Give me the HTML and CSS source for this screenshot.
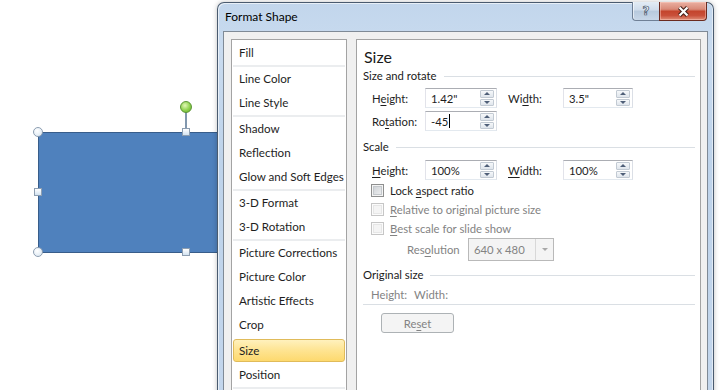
FILE: index.html
```html
<!DOCTYPE html>
<html>
<head>
<meta charset="utf-8">
<link rel="stylesheet" href="styles.css">
</head>
<body>
<div class="shape"></div>
<div class="rotline"></div>
<div class="hrot"></div>
<div class="hc h-tl"></div>
<div class="hc h-bl"></div>
<div class="hs h-ml"></div>
<div class="hs h-tm"></div>
<div class="hs h-bm"></div>

<div class="dialog">
  <div class="titlebar">
    <span class="title">Format Shape</span>
    <div class="caption">
      <div class="btn-help">?</div>
      <div class="btn-close">
        <svg width="13" height="11" viewBox="0 0 13 11"><path d="M2.5 1.5L10.5 9.5M10.5 1.5L2.5 9.5" stroke="#3d1c16" stroke-width="4.2"/><path d="M2.5 1.5L10.5 9.5M10.5 1.5L2.5 9.5" stroke="#ffffff" stroke-width="2.2"/></svg>
      </div>
    </div>
  </div>
  <div class="client">
    <ul class="nav">
      <li>Fill</li>
      <li class="sep"></li>
      <li>Line Color</li>
      <li>Line Style</li>
      <li class="sep"></li>
      <li>Shadow</li>
      <li>Reflection</li>
      <li>Glow and Soft Edges</li>
      <li class="sep"></li>
      <li>3-D Format</li>
      <li>3-D Rotation</li>
      <li class="sep"></li>
      <li>Picture Corrections</li>
      <li>Picture Color</li>
      <li>Artistic Effects</li>
      <li>Crop</li>
      <li class="sel">Size</li>
      <li>Position</li>
      <li class="sep"></li>
    </ul>
    <div class="panel">
      <h1 class="h1">Size</h1>
      <div class="group">Size and rotate</div>
      <div class="row r1">
        <span class="lbl">H<u>e</u>ight:</span>
        <div class="field"><span class="val">1.42"</span><div class="spin"><span class="up"></span><span class="dn"></span></div></div>
        <span class="lbl lbl2">Wi<u>d</u>th:</span>
        <div class="field fw"><span class="val">3.5"</span><div class="spin"><span class="up"></span><span class="dn"></span></div></div>
      </div>
      <div class="row r2">
        <span class="lbl">Ro<u>t</u>ation:</span>
        <div class="field"><span class="val">-45<i class="caret"></i></span><div class="spin"><span class="up"></span><span class="dn"></span></div></div>
      </div>
      <div class="group g2">Scale</div>
      <div class="row r3">
        <span class="lbl"><u>H</u>eight:</span>
        <div class="field"><span class="val">100%</span><div class="spin"><span class="up"></span><span class="dn"></span></div></div>
        <span class="lbl lbl2"><u>W</u>idth:</span>
        <div class="field fw"><span class="val">100%</span><div class="spin"><span class="up"></span><span class="dn"></span></div></div>
      </div>
      <div class="checks">
        <div class="chk"><span class="cb"></span><span>Lock <u>a</u>spect ratio</span></div>
        <div class="chk off"><span class="cb"></span><span><u>R</u>elative to original picture size</span></div>
        <div class="chk off"><span class="cb"></span><span><u>B</u>est scale for slide show</span></div>
      </div>
      <div class="res">
        <span class="reslbl">Res<u>o</u>lution</span>
        <div class="combo"><span class="cval">640 x 480</span><span class="drop"></span></div>
      </div>
      <div class="group g3">Original size</div>
      <div class="hw"><span>Height:</span><span>Width:</span></div>
      <div class="reset">Re<u>s</u>et</div>
    </div>
  </div>
</div>
</body>
</html>
```
FILE: styles.css
```css
* { box-sizing: border-box; }

body {
  margin: 0;
  width: 726px;
  height: 390px;
  overflow: hidden;
  position: relative;
  background: #ffffff;
  font-family: Lato, "Noto Sans", sans-serif;
  font-size: 11.3px;
  color: #1e1e1e;
}

u { text-decoration: underline; text-underline-offset: 2px; }

/* ---- slide canvas ---- */
.shape {
  position: absolute;
  left: 38px;
  top: 132px;
  width: 220px;
  height: 121px;
  background: #4f81bd;
  border: 1.5px solid #385d8a;
}
.rotline {
  position: absolute;
  left: 185px;
  top: 112px;
  width: 2px;
  height: 17px;
  background: #8197ae;
}
.hrot {
  position: absolute;
  left: 180px;
  top: 101px;
  width: 12px;
  height: 12px;
  border-radius: 50%;
  border: 1px solid #5a9434;
  background: radial-gradient(circle at 40% 35%, #e2f7b8, #8fd24e 55%, #62a82c);
}
.hc {
  position: absolute;
  width: 10px;
  height: 10px;
  border-radius: 50%;
  border: 1px solid #8d9eb1;
  background: radial-gradient(circle at 40% 35%, #ffffff, #d6e4f0);
}
.h-tl { left: 33px; top: 127px; }
.h-bl { left: 33px; top: 247px; }
.hs {
  position: absolute;
  width: 8px;
  height: 8px;
  border: 1px solid #8d9eb1;
  background: linear-gradient(#ffffff, #d3e3f1);
}
.h-ml { left: 34px; top: 188px; }
.h-tm { left: 182px; top: 128px; }
.h-bm { left: 182px; top: 248px; }

/* ---- dialog window ---- */
.dialog {
  position: absolute;
  left: 217px;
  top: 2px;
  width: 497px;
  height: 400px;
  border: 1px solid #4a5b6f;
  border-bottom: none;
  border-radius: 7px 7px 0 0;
  background: linear-gradient(to bottom, #c2d6ec, #c9dbef 12%, #bed3ea 40%, #c3d6ec);
  padding: 0 5px;
  display: flex;
  flex-direction: column;
  box-shadow: 0 0 5px rgba(0, 0, 0, 0.25), inset 1px 1px 0 rgba(255, 255, 255, 0.6), inset -1px 0 0 rgba(255, 255, 255, 0.5);
}

.titlebar {
  height: 28px;
  flex: none;
  display: flex;
  justify-content: space-between;
  align-items: flex-start;
}
.title {
  padding: 6px 0 0 2px;
  line-height: 16px;
  font-size: 12px;
  color: #000;
}
.caption {
  display: flex;
  margin-top: -1px;
  margin-right: 1px;
}
.btn-help {
  width: 27px;
  height: 19px;
  border: 1px solid #6f8096;
  border-top: none;
  border-right: none;
  border-radius: 0 0 0 4px;
  background: linear-gradient(#e3ecf5, #cfdceb 45%, #b7c9dd 50%, #c8d7e8);
  display: flex;
  align-items: center;
  justify-content: center;
  font-family: "DejaVu Sans", sans-serif;
  font-size: 12px;
  font-weight: bold;
  color: #eef3f8;
  -webkit-text-stroke: 0.7px #46556a;
  line-height: 19px;
  box-shadow: inset 1px 0 0 rgba(255, 255, 255, 0.6);
}
.btn-close {
  width: 48px;
  height: 19px;
  border: 1px solid #6a2a1f;
  border-top: none;
  border-radius: 0 0 4px 0;
  background: linear-gradient(#eab0a2, #d98a78 40%, #c4452d 52%, #c9503a 75%, #df8f78);
  display: flex;
  align-items: center;
  justify-content: center;
  box-shadow: inset 0 0 0 1px rgba(255, 210, 200, 0.45);
}

.client {
  flex: 1;
  background: #f0f0f0;
  border: 1px solid #7f8a96;
  border-bottom: none;
  display: flex;
  gap: 9px;
  padding: 7px 6px 0 7px;
}

/* ---- category list ---- */
.nav {
  width: 116px;
  flex: none;
  list-style: none;
  margin: 0;
  padding: 1px 0 0;
  background: #ffffff;
  border: 1px solid #a3a3a3;
  border-bottom: none;
}
.nav li {
  height: 24px;
  line-height: 24px;
  padding-left: 7px;
  white-space: nowrap;
  color: #1e1e1e;
  font-size: 11.6px;
}
.nav li.sep {
  height: 2px;
  margin: 0 1px;
  padding: 0;
  background: #ebedef;
}
.nav li.sel {
  height: 23px;
  line-height: 21px;
  margin: 2px 1px 1px;
  padding-left: 5px;
  border: 1px solid #e0bb5a;
  border-radius: 3px;
  background: linear-gradient(#fff1bd, #fee595 45%, #fdd96e);
}

/* ---- right panel ---- */
.panel {
  flex: 1;
  background: #ffffff;
  border: 1px solid #a3a3a3;
  border-bottom: none;
  padding: 6px 5px 0 6px;
}
.h1 {
  margin: 0;
  padding-left: 1px;
  font-size: 16px;
  line-height: 22px;
  font-weight: normal;
  color: #1a1a1a;
}
.group {
  display: flex;
  align-items: center;
  gap: 7px;
  height: 16px;
  line-height: 16px;
  color: #1a1a1a;
  white-space: nowrap;
}
.group::after {
  content: "";
  flex: 1;
  height: 1px;
  background: #dadfe4;
}
.g2 { margin-top: 8px; }
.g3 { margin-top: 6px; }

.row {
  display: flex;
  align-items: center;
  height: 20px;
  padding-left: 9px;
}
.r1 { margin-top: 4px; }
.r2 { margin-top: 3px; height: 20px; }
.r3 { margin-top: 5px; }
.lbl { width: 53px; flex: none; white-space: nowrap; }
.lbl2 { margin-left: 11px; width: 55px; }

.field {
  width: 72px;
  height: 20px;
  flex: none;
  display: flex;
  align-items: center;
  padding: 0 2px 0 5px;
  background: #ffffff;
  border: 1px solid;
  border-color: #abadb3 #dbdfe6 #e3e9ef #e2e3ea;
}
.fw { width: 70px; }
.val { flex: 1; white-space: nowrap; display: flex; align-items: center; }
.caret {
  display: inline-block;
  width: 1px;
  height: 14px;
  background: #000;
  margin-left: 1px;
}
.spin {
  width: 14px;
  height: 16px;
  display: flex;
  flex-direction: column;
  gap: 1px;
}
.spin span {
  flex: 1;
  border: 1px solid #c2cad3;
  border-radius: 1px;
  background: linear-gradient(#f6f8fa, #dfe5ec);
  display: flex;
  align-items: center;
  justify-content: center;
}
.spin .up::after {
  content: "";
  border-left: 3px solid transparent;
  border-right: 3px solid transparent;
  border-bottom: 3px solid #4f5f78;
}
.spin .dn::after {
  content: "";
  border-left: 3px solid transparent;
  border-right: 3px solid transparent;
  border-top: 3px solid #4f5f78;
}

.checks { margin-top: 1px; }
.chk {
  display: flex;
  align-items: center;
  height: 19px;
  padding-left: 8px;
  gap: 6px;
  white-space: nowrap;
}
.cb {
  width: 13px;
  height: 13px;
  flex: none;
  border: 1px solid #8e8f8f;
  background: linear-gradient(135deg, #c9cdd2, #f2f3f4);
  box-shadow: inset 0 0 0 1px #f4f4f4, inset 0 0 0 2px #c4c8cc;
}
.chk.off { color: #838383; }
.chk.off .cb {
  border-color: #c6c6c6;
  background: #f4f4f4;
  box-shadow: inset 0 0 0 1px #fbfbfb, inset 0 0 0 2px #e6e6e6;
}

.res {
  display: flex;
  align-items: center;
  height: 23px;
  padding-left: 44px;
}
.reslbl { width: 61px; color: #838383; white-space: nowrap; }
.combo {
  width: 86px;
  height: 23px;
  display: flex;
  align-items: center;
  border: 1px solid #b9b9b9;
  background: #f4f4f4;
  color: #838383;
}
.cval { flex: 1; padding-left: 5px; white-space: nowrap; }
.drop {
  width: 18px;
  height: 21px;
  border-left: 1px solid #d8d8d8;
  display: flex;
  align-items: center;
  justify-content: center;
}
.drop::after {
  content: "";
  border-left: 3px solid transparent;
  border-right: 3px solid transparent;
  border-top: 3px solid #a8a8a8;
}

.hw {
  margin-top: 4px;
  height: 18px;
  line-height: 16px;
  padding-left: 8px;
  display: flex;
  gap: 7px;
  color: #838383;
  border-bottom: 1px solid #dadfe4;
}
.reset {
  margin: 8px 0 0 18px;
  width: 73px;
  height: 20px;
  border: 1px solid #adb2b5;
  border-radius: 3px;
  background: #f4f4f4;
  color: #838383;
  display: flex;
  align-items: center;
  justify-content: center;
}
```
